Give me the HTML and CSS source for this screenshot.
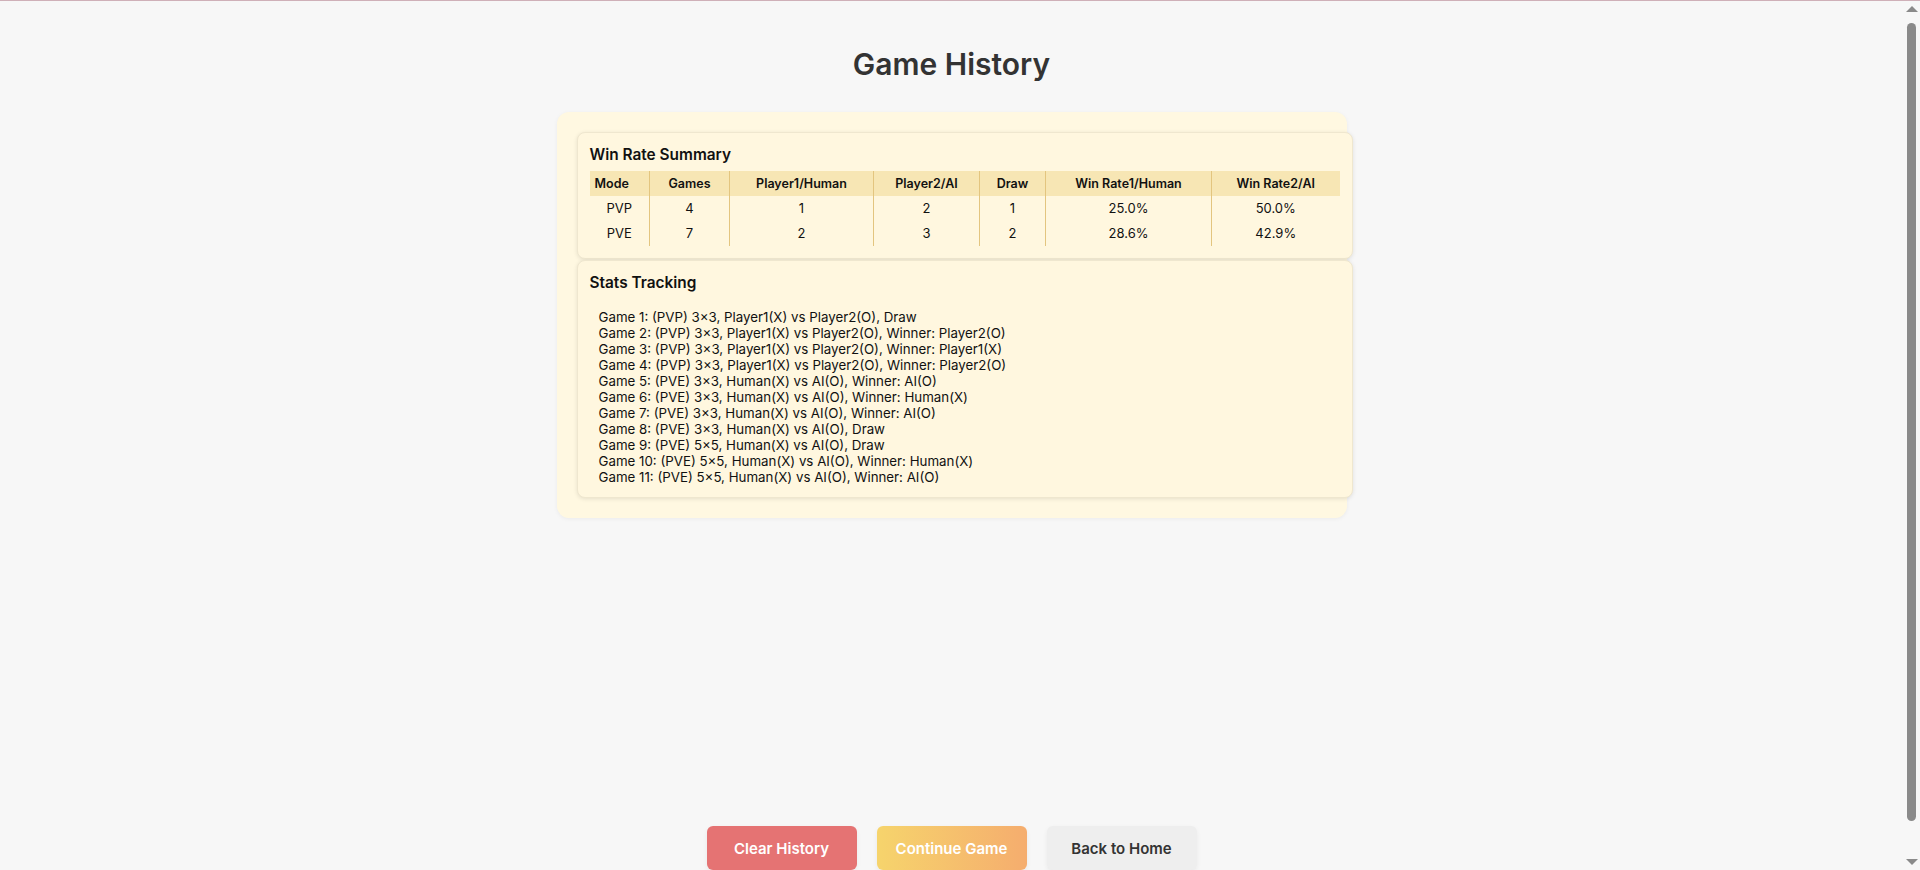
FILE: index.html
```html
<!DOCTYPE html>
<html lang="en">
<head>
<meta charset="utf-8">
<title>Game History</title>
<link rel="stylesheet" href="styles.css">
</head>
<body>
<div class="page">
  <h1 class="page-title">Game History</h1>
  <div class="history-card">
    <section class="panel">
      <h3 class="panel-title">Win Rate Summary</h3>
      <table class="summary">
        <colgroup>
          <col class="c-mode"><col class="c-games"><col class="c-p1"><col class="c-p2"><col class="c-draw"><col class="c-r1"><col class="c-r2">
        </colgroup>
        <thead>
          <tr><th class="left">Mode</th><th>Games</th><th>Player1/Human</th><th>Player2/AI</th><th>Draw</th><th>Win Rate1/Human</th><th>Win Rate2/AI</th></tr>
        </thead>
        <tbody>
          <tr><td>PVP</td><td>4</td><td>1</td><td>2</td><td>1</td><td>25.0%</td><td>50.0%</td></tr>
          <tr><td>PVE</td><td>7</td><td>2</td><td>3</td><td>2</td><td>28.6%</td><td>42.9%</td></tr>
        </tbody>
      </table>
    </section>
    <section class="panel">
      <h3 class="panel-title">Stats Tracking</h3>
      <ul class="games">
        <li>Game 1: (PVP) 3×3, Player1(X) vs Player2(O), Draw</li>
        <li>Game 2: (PVP) 3×3, Player1(X) vs Player2(O), Winner: Player2(O)</li>
        <li>Game 3: (PVP) 3×3, Player1(X) vs Player2(O), Winner: Player1(X)</li>
        <li>Game 4: (PVP) 3×3, Player1(X) vs Player2(O), Winner: Player2(O)</li>
        <li>Game 5: (PVE) 3×3, Human(X) vs AI(O), Winner: AI(O)</li>
        <li>Game 6: (PVE) 3×3, Human(X) vs AI(O), Winner: Human(X)</li>
        <li>Game 7: (PVE) 3×3, Human(X) vs AI(O), Winner: AI(O)</li>
        <li>Game 8: (PVE) 3×3, Human(X) vs AI(O), Draw</li>
        <li>Game 9: (PVE) 5×5, Human(X) vs AI(O), Draw</li>
        <li>Game 10: (PVE) 5×5, Human(X) vs AI(O), Winner: Human(X)</li>
        <li>Game 11: (PVE) 5×5, Human(X) vs AI(O), Winner: AI(O)</li>
      </ul>
    </section>
  </div>
  <div class="actions">
    <button class="btn btn-clear">Clear History</button>
    <button class="btn btn-continue">Continue Game</button>
    <button class="btn btn-home">Back to Home</button>
  </div>
</div>
<div class="scrollbar" aria-hidden="true">
  <div class="sb-btn"><span class="sb-arrow-up"></span></div>
  <div class="sb-thumb"></div>
  <div class="sb-btn sb-btn-down"><span class="sb-arrow-down"></span></div>
</div>
</body>
</html>
```
FILE: styles.css
```css
html, body {
  margin: 0;
  padding: 0;
}
html {
  background: #f7f7f7;
  border-top: 1px solid #cfb0b8;
}
body {
  margin-right: 17px;
  background: #f7f7f7;
  font-family: Inter, "Noto Sans", "Liberation Sans", sans-serif;
  color: #1f1f1f;
}
.page {
  display: flex;
  flex-direction: column;
  align-items: center;
  min-height: calc(100vh - 1px);
  padding-bottom: 40px;
}
.page-title {
  margin: 45px 0 30px;
  font-size: 30px;
  line-height: 36px;
  font-weight: 600;
  color: #333;
}
.history-card {
  width: 750px;
  padding: 20px;
  background: #fff8e1;
  border-radius: 12px;
  box-shadow: 0 1px 4px rgba(0, 0, 0, 0.05);
}
.panel {
  width: 100%;
  padding: 12px;
  background: #fff7df;
  border: 1px solid #efe7cf;
  border-radius: 8px;
  box-shadow: 0 1px 4px rgba(0, 0, 0, 0.1);
}
.panel + .panel {
  margin-top: 1px;
}
.panel-title {
  margin: 0 0 7px;
  font-size: 15.4px;
  line-height: 19px;
  font-weight: 600;
  color: #111;
}
.summary {
  width: 100%;
  border-collapse: collapse;
  table-layout: fixed;
  font-size: 13px;
  color: #111;
}
.c-mode { width: 60px; }
.c-games { width: 80px; }
.c-p1 { width: 144px; }
.c-p2 { width: 106px; }
.c-draw { width: 66px; }
.c-r1 { width: 166px; }
.c-r2 { width: 128px; }
.summary th,
.summary td {
  padding: 4px 5px;
  line-height: 17px;
  text-align: center;
  border-left: 1px solid #e3c57f;
}
.summary th:first-child,
.summary td:first-child {
  border-left: none;
}
.summary th {
  background: #f7e6b4;
  font-size: 12.5px;
  font-weight: 600;
}
.summary th.left {
  text-align: left;
}
.games {
  list-style: none;
  margin: 0;
  padding: 10px 0 0 9px;
  font-size: 13.3px;
  line-height: 16px;
  color: #111;
}
.actions {
  margin-top: auto;
  display: flex;
  gap: 20px;
}
.btn {
  width: 150px;
  height: 44px;
  border: none;
  border-radius: 6px;
  font-family: Inter, "Noto Sans", sans-serif;
  font-size: 15px;
  font-weight: 600;
  box-shadow: 0 2px 5px rgba(0, 0, 0, 0.06);
}
.btn-clear {
  background: #e57373;
  color: #fff;
}
.btn-continue {
  background: linear-gradient(90deg, #f6d46c, #f5ad6e);
  color: #fff;
}
.btn-home {
  background: #eeeeee;
  color: #333;
}

/* classic browser scrollbar drawn over the right edge */
.scrollbar {
  position: fixed;
  top: 1px;
  right: 0;
  width: 17px;
  height: calc(100vh - 1px);
  background: #f7f7f7;
  display: flex;
  flex-direction: column;
  align-items: center;
}
.sb-btn {
  height: 16px;
  width: 17px;
  display: flex;
  align-items: center;
  justify-content: center;
  flex: none;
}
.sb-btn-down {
  margin-top: auto;
}
.sb-arrow-up,
.sb-arrow-down {
  width: 0;
  height: 0;
  border-left: 6px solid transparent;
  border-right: 6px solid transparent;
}
.sb-arrow-up {
  border-bottom: 6px solid #8a8a8a;
}
.sb-arrow-down {
  border-top: 6px solid #8a8a8a;
}
.sb-thumb {
  margin-top: 6px;
  width: 9px;
  height: 798px;
  border-radius: 5px;
  background: #8a8a8a;
  flex: none;
}
```
